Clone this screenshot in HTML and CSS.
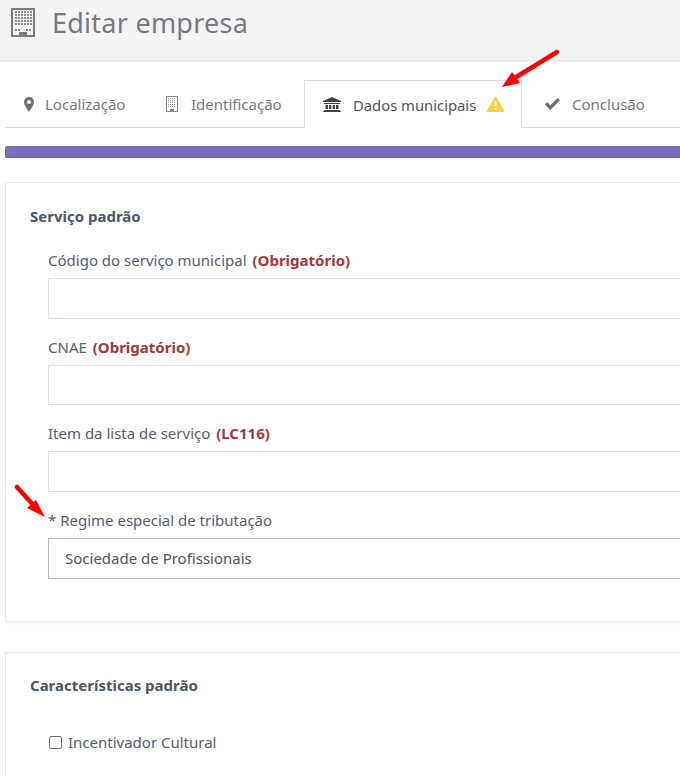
FILE: index.html
```html
<!DOCTYPE html>
<html lang="pt">
<head>
<meta charset="utf-8">
<title>Editar empresa</title>
<link rel="stylesheet" href="styles.css">
</head>
<body>
<div class="page">
  <header class="page-header">
    <svg class="hd-icon" viewBox="0 0 24 29" width="24" height="29"><defs><pattern id="dots" x="4" y="3" width="3" height="3" patternUnits="userSpaceOnUse"><rect width="2" height="2" fill="#8d8d8d"/></pattern></defs><path fill="#7b7b7b" fill-rule="evenodd" d="M0 0h24v29H0zM2 2v25h20V2z"/><rect x="4" y="3" width="17" height="15" fill="url(#dots)"/><path fill="#8d8d8d" d="M4 21h2v2H4zM7 21h2v2H7zM15 21h2v2h-2zM18 21h2v2h-2z"/><path fill="#7b7b7b" d="M8 24h8v5H8z"/></svg>
    <h1>Editar empresa</h1>
  </header>
  <nav class="tabs">
    <a class="tab tab-loc"><svg viewBox="0 0 10 15" width="10" height="15"><path fill="#6f6f6f" fill-rule="evenodd" d="M5 0a5 5 0 0 1 5 5c0 2.500-3 7-5 10C3 12 0 7.500 0 5a5 5 0 0 1 5-5zm0 3a2 2 0 1 0 0 4 2 2 0 0 0 0-4z"/></svg><span>Localização</span></a>
    <a class="tab tab-id"><svg viewBox="0 0 12 16" width="12" height="16"><defs><pattern id="dots-sm" x="2" y="2" width="2" height="2" patternUnits="userSpaceOnUse"><rect width="1" height="1" fill="#9a9a9a"/></pattern></defs><path fill="#8a8a8a" fill-rule="evenodd" d="M0 0h12v16H0zM1 1v14h10V1z"/><rect x="2" y="2" width="8" height="9" fill="url(#dots-sm)"/><path fill="#8a8a8a" d="M4 13h4v3H4z"/></svg><span>Identificação</span></a>
    <a class="tab tab-active"><svg viewBox="0 0 18 15" width="18" height="15"><path fill="#444" d="M9 0l9 4v1H0V4zM1 6h16v1H1zM2.500 8h2.500v4H2.500zM6 8h2.300v4H6zM9.700 8H12v4H9.700zM13 8h2.500v4H13zM1 13h16v1H1zM0 14h18v1H0z"/></svg><span>Dados municipais</span><svg class="warn" viewBox="0 0 17 15" width="17" height="15"><path fill="#f5cf3c" d="M8.500 0c.6 0 1 .3 1.300.8l7 12.400c.5.900-.1 1.800-1.100 1.800H1.300c-1 0-1.600-.9-1.100-1.800L7.200.8C7.500.3 7.900 0 8.500 0z"/><path fill="#fff" d="M7.400 4.500h2.200L9.300 10H7.700zM7.500 11h2v2h-2z"/></svg></a>
    <a class="tab tab-end"><svg viewBox="0 0 15 12" width="15" height="12"><path fill="#6f6f6f" d="M0 6.500l2.300-2.300 3 3L12.700 0 15 2.300 5.300 12z"/></svg><span>Conclusão</span></a>
  </nav>
  <div class="progress"></div>
  <section class="card card-first">
    <h2>Serviço padrão</h2>
    <div class="fields">
      <div class="field"><label>Código do serviço municipal <b>(Obrigatório)</b></label><div class="input"></div></div>
      <div class="field"><label>CNAE <b>(Obrigatório)</b></label><div class="input"></div></div>
      <div class="field"><label>Item da lista de serviço <b>(LC116)</b></label><div class="input"></div></div>
      <div class="field"><label>* Regime especial de tributação</label><div class="input select">Sociedade de Profissionais</div></div>
    </div>
  </section>
  <section class="card card-second">
    <h2>Características padrão</h2>
    <div class="check"><span class="box"></span><span>Incentivador Cultural</span></div>
  </section>
  <svg class="arrow arrow-top" viewBox="0 0 64 44" width="64" height="44"><path fill="none" stroke="#f00" stroke-width="4.500" stroke-linecap="round" d="M58 6L14 33"/><path fill="#f00" d="M3 41l10-15 8 11z"/></svg>
  <svg class="arrow arrow-left" viewBox="0 0 36 36" width="36" height="36"><path fill="none" stroke="#f00" stroke-width="4.500" stroke-linecap="round" d="M3 3l19 21"/><path fill="#f00" d="M31 33l-18-9 9-8z"/></svg>
</div>
</body>
</html>
```
FILE: styles.css
```css
* { box-sizing: border-box; }
html, body { margin: 0; padding: 0; width: 680px; height: 776px; overflow: hidden; background: #fff; }
body { font-family: "Noto Sans", "Open Sans", sans-serif; color: #515d69; }
.page { position: relative; width: 680px; height: 776px; overflow: hidden; }
.page-header { height: 62px; background: #f4f4f4; border-bottom: 2px solid #ececec; display: flex; align-items: flex-start; padding: 8px 0 0 11px; gap: 17px; }
.hd-icon { flex: none; }
h1 { margin: 0; font-size: 27px; line-height: 30px; font-weight: 400; color: #777b80; letter-spacing: .25px; }
.tabs { margin: 18px 0 0 5px; width: 760px; height: 48px; display: flex; border-bottom: 1px solid #ddd; font-size: 15px; color: #727a82; }
.tab { display: flex; align-items: center; height: 48px; }
.tab-loc { padding-left: 19px; width: 141px; gap: 11px; }
.tab-id { padding-left: 20px; width: 158px; gap: 13px; }
.tab-active { background: #fff; border: 1px solid #ddd; border-bottom: 0; width: 218px; padding-left: 18px; gap: 12px; color: #555; font-size: 14.8px; }
.tab-active .warn { margin-left: -1px; }
.tab-end { padding-left: 23px; gap: 12px; }
.progress { margin: 18px 0 0 5px; width: 760px; height: 12px; background: #7a6fbb; border-radius: 2px 0 0 2px; border-bottom: 1px solid #6a60a5; }
.card { margin-left: 5px; width: 760px; background: #fff; border: 1px solid #e7e7e7; padding: 24px 24px 0 24px; }
.card-first { margin-top: 24px; height: 440px; box-shadow: 0 2px 3px rgba(0,0,0,.04); }
.card-second { margin-top: 30px; height: 200px; padding-top: 23px; }
h2 { margin: 0; font-size: 15px; line-height: 18px; font-weight: 700; color: #4d5865; }
.fields { margin-top: 27px; padding-left: 18px; display: flex; flex-direction: column; gap: 20px; }
.field { display: flex; flex-direction: column; }
.field label { font-size: 15px; line-height: 16px; height: 26px; color: #55606b; }
.field label b { margin-left: 2px; color: #a5383c; }
.input { height: 40.5px; border: 1px solid #dde3e6; background: #fff; }
.select { border-color: #b4bcc3; height: 41px; padding: 0 16px; line-height: 39px; font-size: 15px; color: #555; }
.check { margin: 38px 0 0 19px; display: flex; align-items: center; gap: 6px; font-size: 15px; line-height: 20px; color: #55606b; }
.box { width: 13px; height: 13px; border: 1px solid #6c7680; border-radius: 2px; }
.arrow { position: absolute; }
.arrow-top { left: 499px; top: 46px; }
.arrow-left { left: 14px; top: 484px; }
```
